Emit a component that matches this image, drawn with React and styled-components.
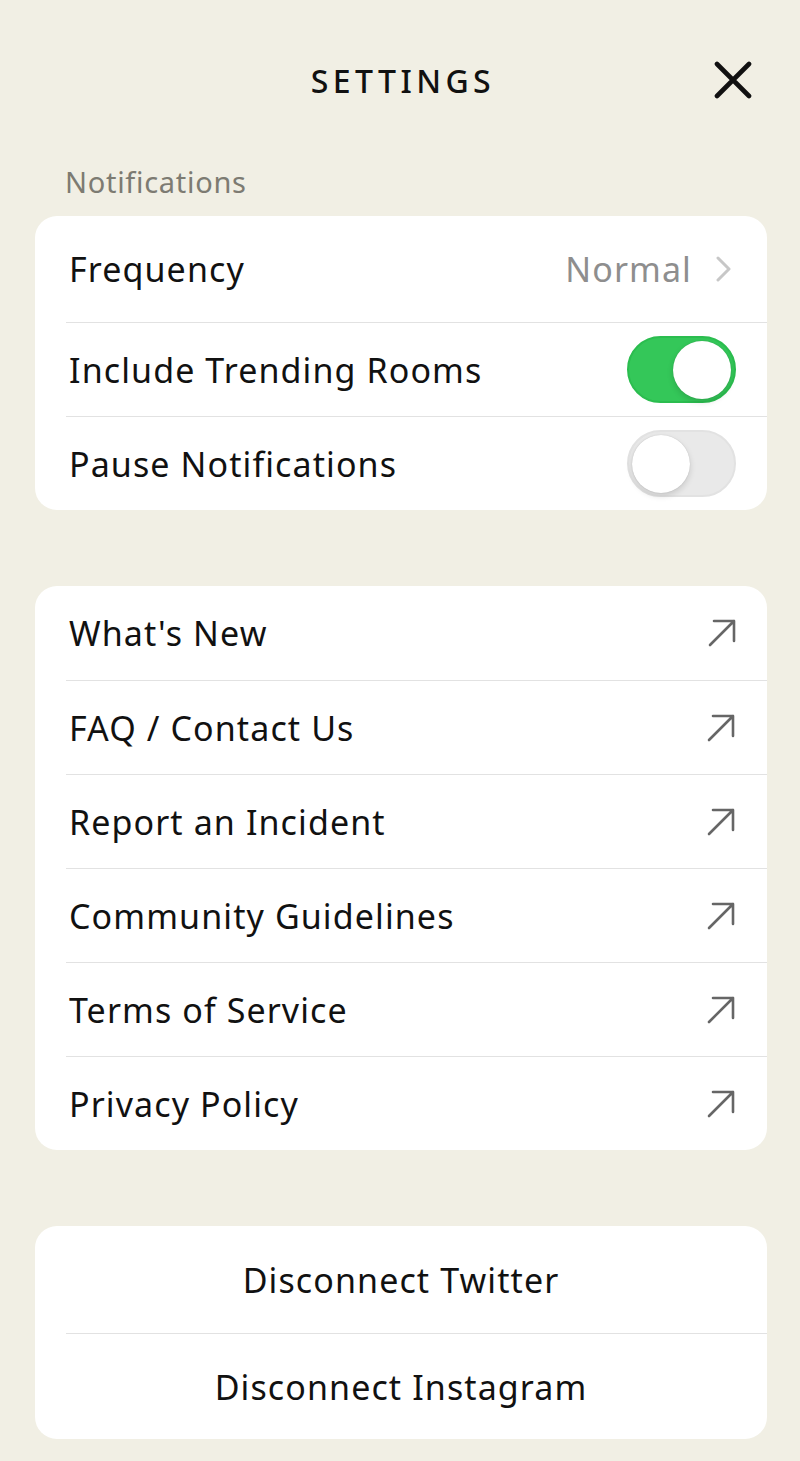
import React from "react";
import styled, { createGlobalStyle } from "styled-components";

const GlobalStyle = createGlobalStyle`
  html, body {
    margin: 0;
    padding: 0;
    background: #f1efe4;
  }
  body {
    font-family: "Noto Sans", "Lato", sans-serif;
    -webkit-font-smoothing: antialiased;
  }
`;

const Page = styled.div`
  min-height: 1461px;
  padding: 0 33px 20px 35px;
  background: #f1efe4;
  box-sizing: border-box;
`;

const Header = styled.div`
  height: 160px;
  display: grid;
  grid-template-columns: 1fr auto 1fr;
  align-items: center;
`;

const Title = styled.h1`
  grid-column: 2;
  margin: 0 0 0 4px;
  font-size: 32px;
  font-weight: 500;
  letter-spacing: 4.4px;
  color: #111;
`;

const CloseButton = styled.button`
  grid-column: 3;
  justify-self: end;
  margin-right: 14px;
  width: 40px;
  height: 40px;
  border: 0;
  padding: 0;
  background: none;
  display: flex;
  align-items: center;
  justify-content: center;
  cursor: pointer;
`;

const SectionLabel = styled.div`
  margin: 4px 0 16px 30px;
  line-height: 36px;
  font-size: 29px;
  letter-spacing: 0.7px;
  color: #7d7b72;
`;

const Card = styled.div`
  background: #fff;
  border-radius: 22px;
  overflow: hidden;
  margin-bottom: ${p => p.$gap || 0}px;
`;

const Row = styled.div`
  height: ${p => p.$h || 94}px;
  margin-left: 31px;
  padding: 0 ${p => p.$pr || 30}px 0 3px;
  display: flex;
  align-items: center;
  justify-content: ${p => (p.$center ? "center" : "space-between")};
  box-sizing: border-box;
  & + & {
    border-top: 1.5px solid #e2e2e2;
  }
  ${p => p.$center && "margin-left: 0; padding: 0; & + & { margin-left: 31px; padding-right: 31px; }"}
`;

const Label = styled.span`
  font-size: 34px;
  letter-spacing: 1.1px;
  color: #111;
`;

const Value = styled.div`
  display: flex;
  align-items: center;
  gap: 24px;
  font-size: 34px;
  letter-spacing: 1.1px;
  color: #8e8e8e;
`;

const Toggle = styled.div`
  flex-shrink: 0;
  width: 109px;
  height: 67px;
  border-radius: 34px;
  box-sizing: border-box;
  padding: 3px;
  display: flex;
  justify-content: ${p => (p.$on ? "flex-end" : "flex-start")};
  background: ${p => (p.$on ? "#34c759" : "#e9e9e9")};
  border: 2px solid ${p => (p.$on ? "#2bbd4f" : "#e2e2e2")};
`;

const Knob = styled.div`
  width: 58px;
  height: 58px;
  border-radius: 50%;
  background: #fff;
  box-shadow: 0 3px 6px rgba(0, 0, 0, 0.14), 0 0 1px rgba(0, 0, 0, 0.2);
  margin-top: -0.5px;
`;

const Chevron = () => (
  <svg width="16" height="26" viewBox="0 0 16 26">
    <path d="M2 2 L13 13 L2 24" fill="none" stroke="#c7c7c7" strokeWidth="3" strokeLinecap="round" strokeLinejoin="round" />
  </svg>
);

const Arrow = () => (
  <svg width="30" height="30" viewBox="0 0 30 30">
    <path d="M3 27 L27 3 M7 3 H27 V23" fill="none" stroke="#666" strokeWidth="2.6" strokeLinecap="round" strokeLinejoin="round" />
  </svg>
);

const links = [
  "What's New",
  "FAQ / Contact Us",
  "Report an Incident",
  "Community Guidelines",
  "Terms of Service",
  "Privacy Policy",
];

export default function App() {
  return (
    <Page>
      <GlobalStyle />
      <Header>
        <Title>SETTINGS</Title>
        <CloseButton aria-label="Close">
          <svg width="38" height="38" viewBox="0 0 38 38">
            <path d="M3 3 L35 35 M35 3 L3 35" stroke="#111" strokeWidth="4.6" strokeLinecap="round" />
          </svg>
        </CloseButton>
      </Header>

      <SectionLabel>Notifications</SectionLabel>
      <Card $gap={76}>
        <Row $h={106} $pr={35}>
          <Label>Frequency</Label>
          <Value>
            Normal
            <Chevron />
          </Value>
        </Row>
        <Row $pr={25}>
          <Label>Include Trending Rooms</Label>
          <Toggle $on>
            <Knob />
          </Toggle>
        </Row>
        <Row $pr={25}>
          <Label>Pause Notifications</Label>
          <Toggle>
            <Knob />
          </Toggle>
        </Row>
      </Card>

      <Card $gap={76}>
        {links.map(l => (
          <Row key={l}>
            <Label>{l}</Label>
            <Arrow />
          </Row>
        ))}
      </Card>

      <Card>
        <Row $h={107} $center>
          <Label>Disconnect Twitter</Label>
        </Row>
        <Row $h={106} $center>
          <Label>Disconnect Instagram</Label>
        </Row>
      </Card>
    </Page>
  );
}
